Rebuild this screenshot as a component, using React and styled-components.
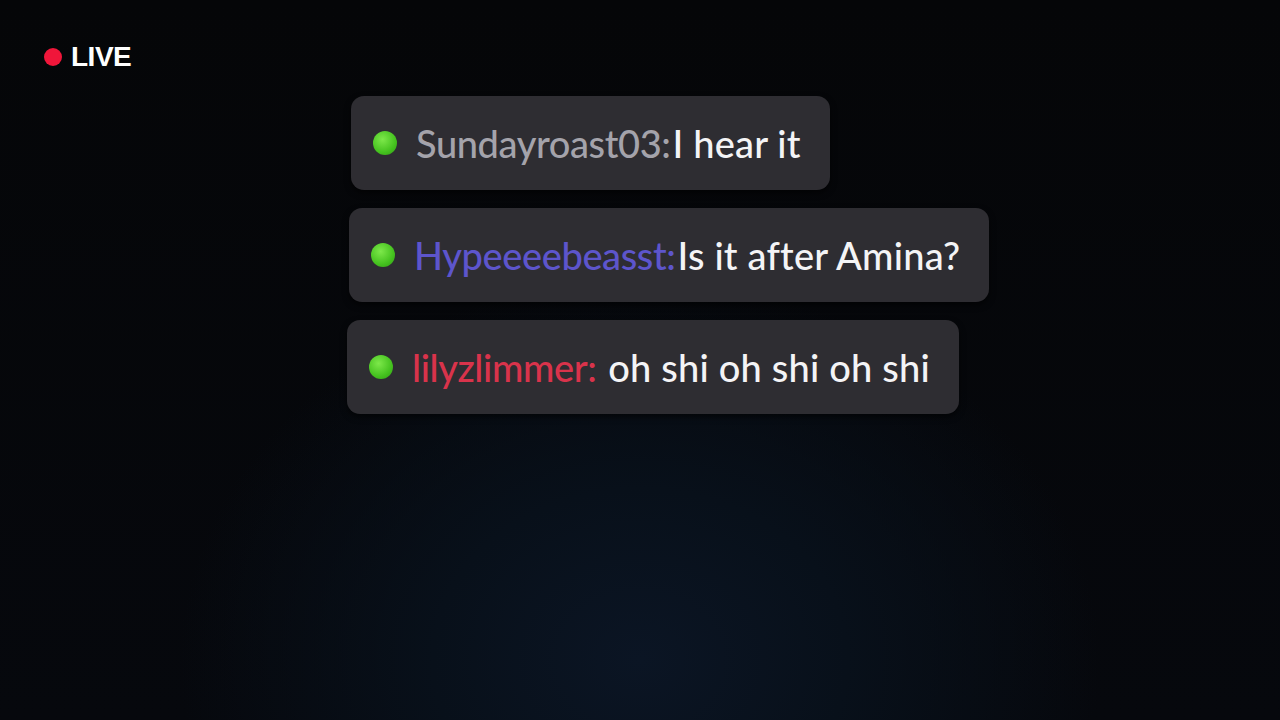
import React from "react";
import styled, { createGlobalStyle } from "styled-components";

const Global = createGlobalStyle`
  html, body {
    margin: 0;
    padding: 0;
    background: #050608;
  }
`;

const Screen = styled.div`
  width: 1280px;
  height: 720px;
  overflow: hidden;
  background:
    radial-gradient(ellipse 460px 380px at 640px 660px, #0b1524 0%, #08101a 45%, rgba(6, 9, 14, 0) 100%),
    linear-gradient(#050608, #06080d);
  font-family: Lato, "Open Sans", sans-serif;
  display: flex;
  flex-direction: column;
`;

const LiveBadge = styled.div`
  display: flex;
  align-items: center;
  gap: 9px;
  padding: 40px 0 0 44px;
  color: #ffffff;
  font-family: "Liberation Sans", Arial, sans-serif;
  font-weight: 700;
  font-size: 28px;
  letter-spacing: -0.5px;
  line-height: 34px;
`;

const RedDot = styled.span`
  width: 18px;
  height: 18px;
  border-radius: 50%;
  background: #f0163a;
`;

const Chat = styled.div`
  display: flex;
  flex-direction: column;
  align-items: flex-start;
  gap: 18px;
  padding: 22px 0 0 351px;
`;

const Bubble = styled.div`
  display: flex;
  align-items: center;
  height: 94px;
  box-sizing: border-box;
  margin-left: ${(p) => p.$shift}px;
  padding: 0 29px 0 22px;
  border-radius: 13px;
  background: #2e2d32;
  box-shadow: 0 3px 6px rgba(0, 0, 0, 0.6);
  font-size: 38px;
  font-weight: 500;
  white-space: pre;
`;

const Online = styled.span`
  flex: none;
  width: 24px;
  height: 24px;
  border-radius: 50%;
  margin-right: 19px;
  background: radial-gradient(circle at 40% 35%, #7de84a 0%, #45c21f 60%, #2f9a14 100%);
`;

const Name = styled.span`
  color: ${(p) => p.$color};
  letter-spacing: -0.4px;
  margin-right: 2px;
`;

const Message = styled.span`
  color: #f4f4f6;
  letter-spacing: 0.2px;
`;

const messages = [
  { name: "Sundayroast03:", color: "#a4a3ab", text: "I hear it", shift: 0 },
  { name: "Hypeeeebeasst:", color: "#5d55cc", text: "Is it after Amina?", shift: -2 },
  { name: "lilyzlimmer:", color: "#d9334b", text: " oh shi oh shi oh shi", shift: -4 },
];

export default function App() {
  return (
    <Screen>
      <Global />
      <LiveBadge>
        <RedDot />
        LIVE
      </LiveBadge>
      <Chat>
        {messages.map((m) => (
          <Bubble key={m.name} $shift={m.shift}>
            <Online />
            <Name $color={m.color}>{m.name}</Name>
            <Message>{m.text}</Message>
          </Bubble>
        ))}
      </Chat>
    </Screen>
  );
}
